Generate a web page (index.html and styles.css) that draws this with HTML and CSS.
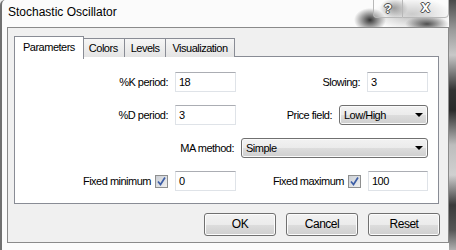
FILE: index.html
```html
<!DOCTYPE html>
<html lang="en">
<head>
    <meta charset="UTF-8">
    <title>Stochastic Oscillator</title>
    <link rel="stylesheet" href="styles.css">
</head>
<body>
    <div class="window">
        <div class="titlebar">
            <span class="title">Stochastic Oscillator</span>
            <div class="caption-buttons">
                <span class="cap-btn help">?</span>
                <span class="cap-btn close">X</span>
            </div>
        </div>

        <div class="client">
            <div class="tabs">
                <span class="tab active">Parameters</span>
                <span class="tab">Colors</span>
                <span class="tab">Levels</span>
                <span class="tab">Visualization</span>
            </div>

            <div class="panel">
                <div class="row">
                    <div class="cell left">
                        <span class="label">%K period:</span>
                        <span class="field short">18</span>
                    </div>
                    <div class="cell right">
                        <span class="label">Slowing:</span>
                        <span class="field short">3</span>
                    </div>
                </div>
                <div class="row">
                    <div class="cell left">
                        <span class="label">%D period:</span>
                        <span class="field short">3</span>
                    </div>
                    <div class="cell right">
                        <span class="label">Price field:</span>
                        <span class="select price">Low/High<i class="arrow"></i></span>
                    </div>
                </div>
                <div class="row wide">
                    <span class="label">MA method:</span>
                    <span class="select method">Simple<i class="arrow"></i></span>
                </div>
                <div class="row">
                    <div class="cell left">
                        <span class="label">Fixed minimum</span>
                        <span class="check">
                            <svg width="11" height="11" viewBox="0 0 11 11"><path d="M2 5.5 L4.5 8.5 L9 1.5" fill="none" stroke="#3d5ea6" stroke-width="1.7"/></svg>
                        </span>
                        <span class="field short">0</span>
                    </div>
                    <div class="cell right">
                        <span class="label">Fixed maximum</span>
                        <span class="check">
                            <svg width="11" height="11" viewBox="0 0 11 11"><path d="M2 5.5 L4.5 8.5 L9 1.5" fill="none" stroke="#3d5ea6" stroke-width="1.7"/></svg>
                        </span>
                        <span class="field narrow">100</span>
                    </div>
                </div>
            </div>

            <div class="buttons">
                <span class="button">OK</span>
                <span class="button">Cancel</span>
                <span class="button">Reset</span>
            </div>
        </div>
    </div>
</body>
</html>
```

FILE: styles.css
```css
body {
    margin: 0;
    width: 456px;
    height: 250px;
    overflow: hidden;
    font-family: "Liberation Sans", Arial, sans-serif;
    background: #eeeeee;
}
.window {
    position: relative;
    height: 250px;
    border-left: 2px solid #707070;
    border-top-left-radius: 5px;
    background:
        linear-gradient(#4a4a4a 0%, #9a9a9a 12%, #c8c8c8 22%, #333 36%, #2a2a2a 44%, #bdbdbd 58%, #d0d0d0 70%, #3a3a3a 82%, #555 92%, #b0b0b0 100%) right / 7px 100% no-repeat,
        radial-gradient(ellipse 16px 12px at 368px 20px, rgba(30,30,30,.9), rgba(30,30,30,0)),
        radial-gradient(ellipse 22px 8px at 425px 24px, rgba(40,40,40,.8), rgba(40,40,40,0)),
        radial-gradient(ellipse 14px 10px at 392px 8px, rgba(60,60,60,.6), rgba(60,60,60,0)),
        radial-gradient(ellipse 40px 16px at 410px 14px, rgba(120,120,120,.5), rgba(120,120,120,0)),
        #fbfbfb;
}
.titlebar {
    height: 27px;
}
.title {
    display: inline-block;
    padding: 5px 0 0 6px;
    font-size: 12px;
    color: #000;
}
.caption-buttons {
    position: absolute;
    top: -1px;
    left: 371px;
    display: flex;
}
.cap-btn {
    height: 17px;
    border: 1px solid #b8b8b8;
    background: rgba(255,255,255,.25);
    color: #fff;
    font-weight: bold;
    font-size: 13px;
    line-height: 17px;
    text-align: center;
    text-shadow: 0 0 1px #333, 1px 0 0 #555, -1px 0 0 #555, 0 1px 0 #555, 0 -1px 0 #555;
}
.help {
    width: 28px;
    border-right: none;
    border-bottom-left-radius: 4px;
}
.close {
    width: 45px;
    border-bottom-right-radius: 4px;
    font-family: "DejaVu Sans", sans-serif;
    font-size: 12px;
}
.client {
    margin-left: 5px;
    width: 434px;
    height: 206px;
    border: 1px solid #8a8a8a;
    background: #f0f0f0;
    padding: 8px 0 0 6px;
    font-size: 11px;
    letter-spacing: -0.5px;
}
.tabs {
    display: flex;
    align-items: flex-end;
    height: 21px;
    position: relative;
    z-index: 1;
    margin-bottom: -1px;
}
.tab {
    height: 18px;
    line-height: 18px;
    padding: 0 6px;
    border: 1px solid #898c95;
    border-bottom: none;
    background: linear-gradient(#f6f6f6, #e4e4e4);
    margin-left: -1px;
}
.tab.active {
    margin-left: 0;
    height: 22px;
    line-height: 20px;
    padding: 0 8px;
    background: #fff;
    margin-right: -1px;
    position: relative;
    z-index: 1;
    align-self: flex-start;
}
.panel {
    width: 425px;
    height: 148px;
    border: 1px solid #898c95;
    background: #fff;
    padding-top: 15px;
    box-sizing: border-box;
}
.row {
    display: flex;
    height: 20px;
    margin-bottom: 13px;
    padding-right: 10px;
    align-items: center;
}
.row.wide {
    justify-content: flex-end;
}
.cell {
    display: flex;
    align-items: center;
    justify-content: flex-end;
}
.cell.left { width: 221px; }
.cell.right { flex: 1; }
.label {
    margin-right: 7px;
}
.field {
    box-sizing: border-box;
    height: 20px;
    line-height: 18px;
    padding-left: 3px;
    border: 1px solid #dfe3e8;
    border-top-color: #abadb3;
    background: #fff;
}
.field.short { width: 61px; }
.field.narrow { width: 60px; }
.select {
    position: relative;
    box-sizing: border-box;
    height: 20px;
    line-height: 18px;
    padding-left: 4px;
    border: 1px solid #707070;
    border-radius: 3px;
    background: linear-gradient(#f2f2f2 0%, #ebebeb 50%, #dddddd 50%, #cfcfcf 100%);
    box-shadow: inset 0 0 0 1px #fafafa;
}
.select.price { width: 89px; }
.select.method { width: 187px; }
.arrow {
    position: absolute;
    right: 4px;
    top: 7px;
    border-left: 4px solid transparent;
    border-right: 4px solid transparent;
    border-top: 4px solid #000;
}
.check {
    box-sizing: border-box;
    width: 13px;
    height: 13px;
    margin-right: 7px;
    margin-left: -3px;
    border: 1px solid #8e8f8f;
    background: linear-gradient(135deg, #cbcfd5, #f0f0f0);
    display: flex;
    align-items: center;
    justify-content: center;
}
.buttons {
    display: flex;
    justify-content: flex-end;
    gap: 10px;
    margin-top: 9px;
    padding-right: 8px;
}
.button {
    box-sizing: border-box;
    width: 72px;
    height: 23px;
    line-height: 21px;
    text-align: center;
    font-size: 12px;
    border: 1px solid #707070;
    border-radius: 3px;
    background: linear-gradient(#f2f2f2 0%, #ebebeb 50%, #dddddd 50%, #cfcfcf 100%);
    box-shadow: inset 0 0 0 1px #fcfcfc;
}
```
